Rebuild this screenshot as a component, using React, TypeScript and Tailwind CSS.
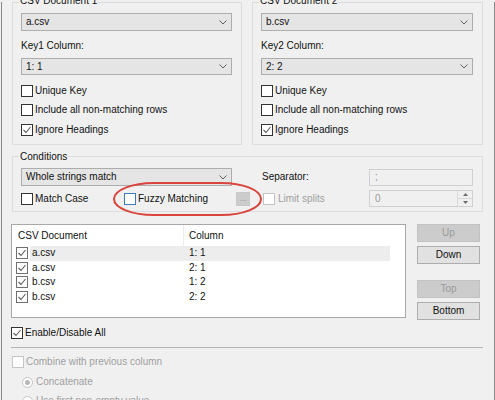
import React from "react";

type CheckVariant = "normal" | "disabled" | "focus" | "list";

function Check({ checked = false, variant = "normal" }: { checked?: boolean; variant?: CheckVariant }) {
  const border =
    variant === "disabled"
      ? "border-[#c4c4c4]"
      : variant === "focus"
      ? "border-[#3d7dbb]"
      : variant === "list"
      ? "border-[#707070]"
      : "border-[#333333]";
  return (
    <span className={`flex h-[12px] w-[12px] shrink-0 items-center justify-center border bg-white ${border}`}>
      {checked && (
        <svg width="10" height="10" viewBox="0 0 10 10">
          <path d="M1.5 5 L4 7.5 L8.5 2" fill="none" stroke="#5a5a5a" strokeWidth="1.1" />
        </svg>
      )}
    </span>
  );
}

function Chevron() {
  return (
    <svg width="8" height="5" viewBox="0 0 8 5">
      <path d="M0.5 0.5 L4 4 L7.5 0.5" fill="none" stroke="#606060" strokeWidth="1" />
    </svg>
  );
}

function Combo({ value, className }: { value: string; className: string }) {
  return (
    <div className={`flex items-center justify-between border border-[#adadad] bg-[#e5e5e5] pl-[4px] pr-[4px] ${className}`}>
      <span>{value}</span>
      <Chevron />
    </div>
  );
}

function CheckRow({ label, checked = false }: { label: string; checked?: boolean }) {
  return (
    <div className="flex h-[19.5px] items-center gap-[2px]">
      <Check checked={checked} />
      <span>{label}</span>
    </div>
  );
}

function DocGroup({ title, file, keyLabel, col, widthClass }: { title: string; file: string; keyLabel: string; col: string; widthClass: string }) {
  return (
    <div className={`relative h-[143px] border border-[#dcdcdc] pl-[8px] pr-[9px] pt-[10px] ${widthClass}`}>
      <span className="absolute left-[6px] top-[-8px] bg-[#f0f0f0] px-[1px] leading-[12px]">{title}</span>
      <Combo value={file} className="h-[18px]" />
      <div className="mt-[8px] leading-[14px]">{keyLabel}</div>
      <Combo value={col} className="mt-[5px] h-[17px]" />
      <div className="mt-[6px] flex flex-col">
        <CheckRow label="Unique Key" />
        <CheckRow label="Include all non-matching rows" />
        <CheckRow label="Ignore Headings" checked />
      </div>
    </div>
  );
}

function Btn({ label, disabled = false, className = "" }: { label: string; disabled?: boolean; className?: string }) {
  return (
    <div
      className={`flex h-[18px] w-[63px] items-center justify-center border ${
        disabled ? "border-[#c2c2c2] bg-[#cccccc] text-[#9a9a9a]" : "border-[#adadad] bg-[#e1e1e1] text-[#111111]"
      } ${className}`}
    >
      {label}
    </div>
  );
}

const rows = [
  { name: "a.csv", col: "1: 1", hl: true },
  { name: "a.csv", col: "2: 1", hl: false },
  { name: "b.csv", col: "1: 2", hl: false },
  { name: "b.csv", col: "2: 2", hl: false },
];

function Radio({ checked = false }: { checked?: boolean }) {
  return (
    <span className="flex h-[11px] w-[11px] shrink-0 items-center justify-center rounded-full border border-[#c4c4c4] bg-white">
      {checked && <span className="h-[5px] w-[5px] rounded-full bg-[#b8b8b8]" />}
    </span>
  );
}

export default function App() {
  return (
    <div className="relative h-[400px] w-[495px] overflow-hidden bg-[#f0f0f0] font-['Liberation_Sans',Arial,sans-serif] text-[10px] leading-[12px] text-[#111111]">
      <div className="ml-[1px] h-[400px] w-[494px] border-x border-[#8a8a8a] pl-[9px] pr-[11px]">
        {/* top groups */}
        <div className="ml-[1px] mt-[2px] flex gap-[10px]">
          <DocGroup title="CSV Document 1" file="a.csv" keyLabel="Key1 Column:" col="1: 1" widthClass="w-[230px]" />
          <DocGroup title="CSV Document 2" file="b.csv" keyLabel="Key2 Column:" col="2: 2" widthClass="w-[231px]" />
        </div>

        {/* conditions */}
        <div className="relative ml-[1px] mt-[11px] h-[56px] w-[471px] border border-[#dcdcdc] pl-[8px] pt-[11px]">
          <span className="absolute left-[6px] top-[-6px] bg-[#f0f0f0] px-[1px] leading-[12px]">Conditions</span>
          <div className="flex h-[18px] items-center">
            <Combo value="Whole strings match" className="h-[18px] w-[211px]" />
            <div className="w-[30px]" />
            <span className="w-[107px]">Separator:</span>
            <div className="flex h-[17px] w-[104px] items-center border border-[#d0d0d0] bg-[#f0f0f0] pl-[5px] text-[#9a9a9a]">;</div>
          </div>
          <div className="mt-[4px] flex h-[17px] items-center">
            <div className="flex w-[103px] items-center gap-[2px]">
              <Check />
              <span>Match Case</span>
            </div>
            <div className="flex w-[112px] items-center gap-[2px]">
              <Check variant="focus" />
              <span>Fuzzy Matching</span>
            </div>
            <div className="flex h-[14px] w-[14px] items-center justify-center border border-[#c8c8c8] bg-[#cccccc] text-[8px] leading-[8px] text-[#8a8a8a]">
              ...
            </div>
            <div className="w-[13px]" />
            <div className="flex w-[106px] items-center gap-[3px] text-[#a0a0a0]">
              <Check variant="disabled" />
              <span>Limit splits</span>
            </div>
            <div className="flex h-[17px] w-[104px] items-stretch border border-[#d0d0d0] bg-[#f0f0f0]">
              <div className="flex flex-1 items-center pl-[5px] text-[#9a9a9a]">0</div>
              <div className="flex w-[15px] flex-col border-l border-[#d8d8d8]">
                <div className="flex flex-1 items-center justify-center border-b border-[#d8d8d8]">
                  <svg width="5" height="3" viewBox="0 0 5 3">
                    <path d="M0 3 L2.5 0 L5 3 Z" fill="#6a6a6a" />
                  </svg>
                </div>
                <div className="flex flex-1 items-center justify-center">
                  <svg width="5" height="3" viewBox="0 0 5 3">
                    <path d="M0 0 L2.5 3 L5 0 Z" fill="#6a6a6a" />
                  </svg>
                </div>
              </div>
            </div>
          </div>
        </div>

        {/* list + buttons */}
        <div className="mt-[12px] flex gap-[11px]">
          <div className="h-[94px] w-[395px] border border-[#a8a8a8] bg-white">
            <div className="flex h-[21px] items-center">
              <span className="w-[171px] pl-[6px]">CSV Document</span>
              <span className="h-full w-px bg-[#ececec]" />
              <span className="pl-[5px]">Column</span>
            </div>
            {rows.map((r, i) => (
              <div key={i} className="flex h-[14.6px] items-center">
                <div className="flex w-[18px] items-center pl-[4px]">
                  <Check checked variant="list" />
                </div>
                <div className={`flex h-full w-[360px] items-center ${r.hl ? "bg-[#ededed]" : ""}`}>
                  <span className="w-[153px] pl-[2px]">{r.name}</span>
                  <span className="pl-[6px]">{r.col}</span>
                </div>
              </div>
            ))}
          </div>
          <div className="flex flex-col">
            <Btn label="Up" disabled />
            <Btn label="Down" className="mt-[4px]" />
            <Btn label="Top" disabled className="mt-[16px]" />
            <Btn label="Bottom" className="mt-[4px]" />
          </div>
        </div>

        {/* enable all */}
        <div className="mt-[6px] flex h-[14px] items-center gap-[2px]">
          <Check checked />
          <span>Enable/Disable All</span>
        </div>
        <div className="mt-[7px] h-px w-[472px] bg-[#b4b4b4]" />
        <div className="ml-[1px] mt-[7px] flex h-[14px] items-center gap-[2px] text-[#a0a0a0]">
          <Check variant="disabled" />
          <span>Combine with previous column</span>
        </div>
        <div className="ml-[11px] mt-[6px] flex h-[14px] items-center gap-[3px] text-[#a0a0a0]">
          <Radio checked />
          <span>Concatenate</span>
        </div>
        <div className="ml-[11px] mt-[5px] flex h-[14px] items-center gap-[3px] text-[#a0a0a0]">
          <Radio />
          <span>Use first non-empty value</span>
        </div>
      </div>

      {/* red annotation ellipse */}
      <svg className="pointer-events-none absolute left-[112px] top-[181px]" width="152" height="38" viewBox="0 0 152 38">
        <rect x="2" y="2" width="147" height="32" rx="40" ry="16" fill="none" stroke="#d9443c" strokeWidth="2" />
      </svg>
    </div>
  );
}
